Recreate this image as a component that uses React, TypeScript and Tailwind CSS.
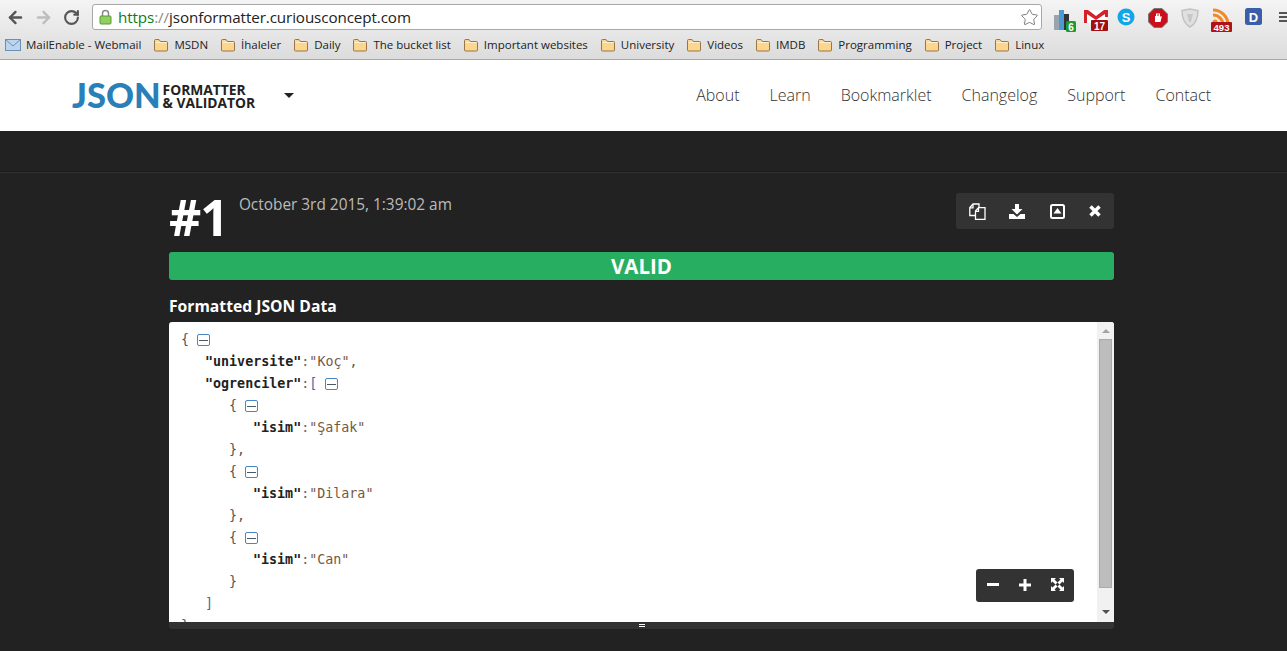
import React from 'react';
import { ArrowLeft, ArrowRight, RotateCw, Star } from 'lucide-react';

const bookmarks = ['MSDN', 'İhaleler', 'Daily', 'The bucket list', 'Important websites', 'University', 'Videos', 'IMDB', 'Programming', 'Project', 'Linux'];
const navLinks = ['About', 'Learn', 'Bookmarklet', 'Changelog', 'Support', 'Contact'];

const FolderIcon = () => (
    <svg width="16" height="14" viewBox="0 0 16 14" className="shrink-0">
        <path d="M1.500 12V2.500a1 1 0 0 1 1-1h3.500l1.500 2h6a1 1 0 0 1 1 1V12a1 1 0 0 1-1 1h-11a1 1 0 0 1-1-1z" fill="#fcd68f" stroke="#9a7546" strokeWidth="1" />
        <path d="M2.500 4.500h11" stroke="#fff0cf" strokeWidth="1" />
    </svg>
);

const MailIcon = () => (
    <svg width="16" height="12" viewBox="0 0 16 12" className="shrink-0">
        <rect x="0.5" y="0.5" width="15" height="11" fill="#bcd5ee" stroke="#6c8fb5" />
        <path d="M1 1l7 6 7-6" fill="none" stroke="#6c8fb5" />
    </svg>
);

const Collapse = () => (
    <span className="inline-flex items-center justify-center w-[13px] h-[12px] ml-[8px] border border-[#4a86c0] rounded-[2px] align-middle">
        <span className="block w-[9px] h-px bg-[#4a5a6a]"></span>
    </span>
);

const Key = ({ name }: { name: string }) => <span className="font-bold text-[#222]">"{name}"</span>;
const Colon = () => <span className="text-[#666]">:</span>;
const Str = ({ v }: { v: string }) => <span className="text-[#77593f]">"{v}"</span>;
const P = ({ c }: { c: string }) => <span className="text-[#555]">{c}</span>;
const Br = ({ c }: { c: string }) => <span className="text-[#3a6ea5]">{c}</span>;

const ExtensionIcons = () => (
    <div className="flex items-start ml-[12px] pt-[8px] gap-[6px]">
        <svg width="24" height="24" viewBox="0 0 24 24" className="shrink-0">
            <rect x="0" y="7" width="5" height="15" fill="#9aa4ac" />
            <rect x="5" y="2" width="5" height="20" fill="#4a9ad4" />
            <rect x="10" y="6" width="5" height="16" fill="#333" />
            <rect x="12" y="13" width="10" height="11" rx="1.500" fill="#1c9a2c" />
            <text x="17" y="22.500" textAnchor="middle" fontSize="10" fontWeight="700" fill="#fff" fontFamily="Liberation Sans, sans-serif">6</text>
        </svg>
        <svg width="25" height="25" viewBox="0 0 25 25" className="shrink-0">
            <path d="M0 2h24v13H0z" fill="#fff" />
            <path d="M0 2h3v13H0zM21 2h3v7h-3zM0 2h4l8 6 8-6h4v2l-12 8L0 4z" fill="#d3232a" />
            <rect x="7" y="12" width="17" height="11" rx="1" fill="#a10e14" />
            <text x="15.500" y="21.500" textAnchor="middle" fontSize="10" fontWeight="700" fill="#fff" fontFamily="Liberation Sans, sans-serif">17</text>
        </svg>
        <svg width="18" height="18" viewBox="0 0 18 18" className="shrink-0 ml-[2px]">
            <circle cx="9" cy="9" r="8.500" fill="#12a5e8" />
            <text x="9" y="13.500" textAnchor="middle" fontSize="13" fontWeight="700" fill="#fff" fontFamily="Liberation Sans, sans-serif">S</text>
        </svg>
        <svg width="20" height="20" viewBox="0 0 20 20" className="shrink-0 ml-[7px]">
            <path d="M6 .5h8L19.500 6v8L14 19.500H6L.5 14V6z" fill="#c8101c" stroke="#777" />
            <path d="M7 14V8h1V5.500h1V8h.5V5h1v3h.5V5.500h1V9l1-1 .8.500L12.500 14z" fill="#fff" />
        </svg>
        <svg width="18" height="20" viewBox="0 0 18 20" className="shrink-0 ml-[7px]">
            <path d="M1 2.500L9 1l8 1.500c0 7-2 13-8 16.500C3 15.500 1 9.500 1 2.500z" fill="#e0e0e0" stroke="#c2c2c2" strokeWidth="1.500" />
            <path d="M6 6h6l-2 8H8z" fill="#c8c8c8" />
        </svg>
        <svg width="22" height="25" viewBox="0 0 22 25" className="shrink-0 ml-[6px]">
            <circle cx="4" cy="14" r="2.500" fill="#f08a24" />
            <path d="M2 7a10 10 0 0 1 10 10M2 2a15 15 0 0 1 15 15" fill="none" stroke="#f08a24" strokeWidth="3" />
            <rect x="0" y="14" width="21" height="10" rx="1" fill="#b0121a" />
            <text x="10.500" y="22.500" textAnchor="middle" fontSize="9.500" fontWeight="700" fill="#fff" fontFamily="Liberation Sans, sans-serif">493</text>
        </svg>
        <svg width="17" height="17" viewBox="0 0 17 17" className="shrink-0 ml-[6px]">
            <rect width="17" height="17" rx="2.500" fill="#3b5ea8" />
            <text x="8.500" y="13.500" textAnchor="middle" fontSize="13" fontWeight="700" fill="#fff" fontFamily="Liberation Sans, sans-serif">D</text>
        </svg>
        <div className="flex flex-col gap-[2px] mt-[4px] ml-[11px]">
            <span className="block w-[8px] h-[2px] bg-[#555]"></span>
            <span className="block w-[8px] h-[2px] bg-[#555]"></span>
            <span className="block w-[8px] h-[2px] bg-[#555]"></span>
        </div>
    </div>
);

export default function App() {
    return (
        <div className="h-[651px] overflow-hidden bg-[#222] flex flex-col font-['Open_Sans',sans-serif]">
            {/* browser chrome */}
            <div className="h-[60px] shrink-0 bg-gradient-to-b from-[#f4f4f4] to-[#dcdcdc] border-b border-[#a9a9a9]">
                <div className="h-[34px] flex items-start">
                    <div className="flex items-center pl-[6px] pt-[8px] gap-[9px] w-[92px]">
                        <ArrowLeft size={19} strokeWidth={3} className="text-[#555]" />
                        <ArrowRight size={19} strokeWidth={3} className="text-[#bdbdbd]" />
                        <RotateCw size={17} strokeWidth={3} className="text-[#555] ml-[1px]" />
                    </div>
                    <div className="mt-[4px] h-[26px] w-[950px] shrink-0 bg-white border border-[#a8a8a8] rounded-[3px] flex items-center pl-[6px] pr-[2px]">
                        <svg width="13" height="16" viewBox="0 0 13 16" className="shrink-0">
                            <path d="M3.500 7V4.500a3 3 0 0 1 6 0V7" fill="none" stroke="#8a8a8a" strokeWidth="1.500" />
                            <rect x="1" y="7" width="11" height="8" rx="1" fill="#8fd05e" stroke="#5c9a35" />
                        </svg>
                        <span className="ml-[6px] mt-[1px] text-[15.2px] leading-none tracking-[-0.1px] whitespace-nowrap">
                            <span className="text-[#0a7d1f]">https</span><span className="text-[#888]">://</span><span className="text-[#222]">jsonformatter.curiousconcept.com</span>
                        </span>
                        <Star size={19} strokeWidth={1.2} className="ml-auto text-[#777]" />
                    </div>
                    <ExtensionIcons />
                </div>
                <div className="h-[22px] flex items-center pl-[5px] gap-[12px] text-[11.5px] text-[#222] whitespace-nowrap">
                    <div className="flex items-center gap-[5px]"><MailIcon /><span>MailEnable - Webmail</span></div>
                    {bookmarks.map(b => (
                        <div key={b} className="flex items-center gap-[5px]"><FolderIcon /><span>{b}</span></div>
                    ))}
                </div>
            </div>

            {/* site header */}
            <header className="h-[71px] shrink-0 bg-white flex items-center pl-[72px] pr-[76px]">
                <span className="text-[34.5px] font-['Lato',sans-serif] font-black leading-none text-[#2980b9]">JSON</span>
                <div className="ml-[2px] flex flex-col text-[13.8px] font-bold leading-[13px] text-[#222] mt-[1px] whitespace-nowrap">
                    <span>FORMATTER</span>
                    <span>&amp; VALIDATOR</span>
                </div>
                <span className="ml-[29px] w-0 h-0 border-x-[5px] border-x-transparent border-t-[5px] border-t-[#222]"></span>
                <nav className="ml-auto flex gap-[30px] pb-[2px] text-[16px] font-light text-[#333]">
                    {navLinks.map(l => <a key={l}>{l}</a>)}
                </nav>
            </header>

            {/* page */}
            <div className="h-[41px] shrink-0 bg-[#222] border-b border-[#191919]"></div>
            <main className="border-t border-[#333] pl-[169px] pt-[20px]">
                <div className="w-[945px]">
                    <div className="flex items-start justify-between h-[59px]">
                        <div className="flex items-start">
                            <h1 className="text-[50px] font-bold leading-[48px] text-white tracking-[-1px]">#1</h1>
                            <span className="ml-[11px] mt-[1px] text-[15.4px] leading-[22px] text-[#bbb]">October 3rd 2015, 1:39:02 am</span>
                        </div>
                        <div className="w-[158px] h-[36px] bg-[#333] rounded-[3px] flex items-center pl-[1px]">
                            <div className="w-[40px] flex justify-center">
                                <svg width="17" height="17" viewBox="0 0 17 17" fill="none" stroke="#fff" strokeWidth="1.300">
                                    <path d="M6.500 12.500H.8V4.500L4 1h6v3.500" />
                                    <path d="M4 1.500v3.300H1" />
                                    <path d="M6.500 8l3-3.300h6.500v11.800H6.500z" />
                                    <path d="M9.500 5v3.300H6.500" />
                                </svg>
                            </div>
                            <div className="w-[40px] flex justify-center">
                                <svg width="16" height="15" viewBox="0 0 16 15" fill="#fff">
                                    <path d="M6 0h4v5h3.500L8 10.500 2.500 5H6z" />
                                    <path d="M0 10h4.500L8 13l3.500-3H16v5H0z" />
                                </svg>
                            </div>
                            <div className="w-[40px] flex justify-center">
                                <svg width="15" height="15" viewBox="0 0 15 15">
                                    <rect x="1" y="1" width="13" height="13" rx="1.500" fill="none" stroke="#fff" strokeWidth="2" />
                                    <path d="M7.500 4L11.500 9.500h-8z" fill="#fff" />
                                </svg>
                            </div>
                            <div className="w-[36px] flex justify-center">
                                <svg width="12" height="12" viewBox="0 0 12 12" stroke="#fff" strokeWidth="3.500">
                                    <path d="M1.500 1.500l9 9M10.500 1.500l-9 9" />
                                </svg>
                            </div>
                        </div>
                    </div>
                    <div className="h-[28px] bg-[#27ae60] rounded-[3px] flex items-center justify-center text-[20.5px] font-bold text-white">VALID</div>
                    <h2 className="mt-[16px] h-[26px] text-[15.7px] leading-[20px] font-bold text-white">Formatted JSON Data</h2>

                    <div className="relative h-[300px] bg-white rounded-t-[3px] overflow-hidden flex">
                        <div className="flex-1 pt-[7px] pl-[12px] font-['DejaVu_Sans_Mono',monospace] text-[13.33px] leading-[22px] whitespace-pre">
                            <div className="h-[22px]"><P c="{" /><Collapse /></div>
                            <div className="h-[22px] pl-[24px]"><Key name="universite" /><Colon /><Str v="Koç" /><P c="," /></div>
                            <div className="h-[22px] pl-[24px]"><Key name="ogrenciler" /><Colon /><Br c="[" /><Collapse /></div>
                            <div className="h-[22px] pl-[48px]"><P c="{" /><Collapse /></div>
                            <div className="h-[22px] pl-[72px]"><Key name="isim" /><Colon /><Str v="Şafak" /></div>
                            <div className="h-[22px] pl-[48px]"><P c="}," /></div>
                            <div className="h-[22px] pl-[48px]"><P c="{" /><Collapse /></div>
                            <div className="h-[22px] pl-[72px]"><Key name="isim" /><Colon /><Str v="Dilara" /></div>
                            <div className="h-[22px] pl-[48px]"><P c="}," /></div>
                            <div className="h-[22px] pl-[48px]"><P c="{" /><Collapse /></div>
                            <div className="h-[22px] pl-[72px]"><Key name="isim" /><Colon /><Str v="Can" /></div>
                            <div className="h-[22px] pl-[48px]"><P c="}" /></div>
                            <div className="h-[22px] pl-[24px]"><Br c="]" /></div>
                            <div className="h-[22px]"><P c="}" /></div>
                        </div>
                        <div className="w-[17px] shrink-0 bg-[#f1f1f1] flex flex-col items-center">
                            <span className="mt-[7px] w-0 h-0 border-x-[4px] border-x-transparent border-b-[4px] border-b-[#a3a3a3]"></span>
                            <div className="mt-[6px] w-[13px] h-[249px] bg-[#bdbdbd] border border-[#aaa]"></div>
                            <span className="mt-[22px] w-0 h-0 border-x-[4px] border-x-transparent border-t-[4px] border-t-[#505050]"></span>
                        </div>
                        <div className="absolute left-[807px] top-[247px] w-[98px] h-[33px] bg-[#333] rounded-[3px] flex items-center pl-[1px] pb-[2px]">
                            <div className="w-[32px] flex justify-center"><span className="block w-[12px] h-[3px] bg-white"></span></div>
                            <div className="w-[32px] flex justify-center">
                                <svg width="12" height="12" viewBox="0 0 12 12" fill="#fff"><path d="M4.500 0h3v4.500H12v3H7.500V12h-3V7.500H0v-3h4.500z" /></svg>
                            </div>
                            <div className="w-[32px] flex justify-center">
                                <svg width="13" height="13" viewBox="0 0 13 13" fill="#fff">
                                    <path d="M0 0h5L3.500 1.500 6.500 4.500 4.500 6.500 1.500 3.500 0 5zM13 0v5L11.500 3.500 8.500 6.500 6.500 4.500 9.500 1.500 8 0zM0 13V8l1.500 1.500L4.500 6.500 6.500 8.500 3.500 11.500 5 13zM13 13H8l1.500-1.500L6.500 8.500 8.500 6.500 11.500 9.500 13 8z" />
                                </svg>
                            </div>
                        </div>
                    </div>
                    <div className="h-[7px] bg-[#333] rounded-b-[3px] flex flex-col items-center justify-center gap-px">
                        <span className="block w-[6px] h-px bg-white"></span>
                        <span className="block w-[6px] h-px bg-white"></span>
                    </div>
                </div>
            </main>
        </div>
    );
}
